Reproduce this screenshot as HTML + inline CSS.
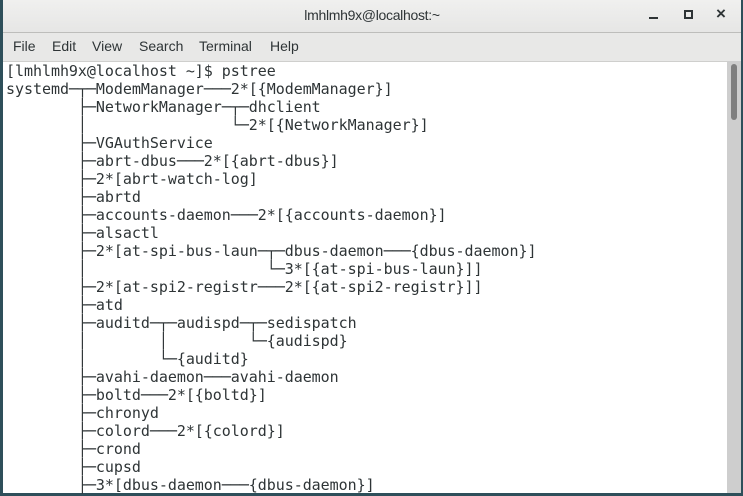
<!DOCTYPE html>
<html><head><meta charset="utf-8"><style>
html,body{margin:0;padding:0;}
body{width:743px;height:496px;overflow:hidden;background:#2e4f5a;position:relative;font-family:"Liberation Sans",sans-serif;}
#win{position:absolute;left:3px;top:0;width:738px;height:493px;background:#fff;}
#title{position:absolute;left:0;top:0;width:738px;height:32px;background:linear-gradient(#f0f0ef,#e6e6e5);border-bottom:1px solid #bdbdbb;}
#title .t{position:absolute;left:0;width:738px;top:7px;text-align:center;font-size:14px;color:#2e3436;letter-spacing:-0.3px;}
#menu{position:absolute;left:0;top:33px;width:738px;height:28px;background:#e8e8e7;border-bottom:1px solid #cfcfcd;}
#menu span{position:absolute;top:5px;font-size:14px;color:#2e3436;}
pre{position:absolute;left:3px;top:62px;margin:0;font-family:"DejaVu Sans Mono",monospace;font-size:15px;line-height:18px;color:#2e3436;letter-spacing:-0.04px;}
#sb{position:absolute;left:724px;top:61px;width:14px;height:432px;background:#cecece;}
#th{position:absolute;left:4px;top:3px;width:6px;height:56px;background:#7f7f7f;border-radius:3px;}
</style></head><body>
<div id="win">
<div id="title"><div class="t">lmhlmh9x@localhost:~</div>
<div style="position:absolute;left:646px;top:17px;width:9px;height:2px;background:#2e3436"></div>
<div style="position:absolute;left:681px;top:10px;width:5px;height:5px;border:2px solid #2e3436"></div>
<div style="position:absolute;left:713px;top:4px;font-size:17px;color:#2e3436;font-weight:bold">×</div>
</div>
<div id="menu"><span style="left:10px">File</span><span style="left:49px">Edit</span><span style="left:89px">View</span><span style="left:136px">Search</span><span style="left:196px">Terminal</span><span style="left:267px">Help</span></div>
<pre>[lmhlmh9x@localhost ~]$ pstree
systemd─┬─ModemManager───2*[{ModemManager}]
        ├─NetworkManager─┬─dhclient
        │                └─2*[{NetworkManager}]
        ├─VGAuthService
        ├─abrt-dbus───2*[{abrt-dbus}]
        ├─2*[abrt-watch-log]
        ├─abrtd
        ├─accounts-daemon───2*[{accounts-daemon}]
        ├─alsactl
        ├─2*[at-spi-bus-laun─┬─dbus-daemon───{dbus-daemon}]
        │                    └─3*[{at-spi-bus-laun}]]
        ├─2*[at-spi2-registr───2*[{at-spi2-registr}]]
        ├─atd
        ├─auditd─┬─audispd─┬─sedispatch
        │        │         └─{audispd}
        │        └─{auditd}
        ├─avahi-daemon───avahi-daemon
        ├─boltd───2*[{boltd}]
        ├─chronyd
        ├─colord───2*[{colord}]
        ├─crond
        ├─cupsd
        ├─3*[dbus-daemon───{dbus-daemon}]</pre>
<div id="sb"><div id="th"></div></div>
</div>
</body></html>
